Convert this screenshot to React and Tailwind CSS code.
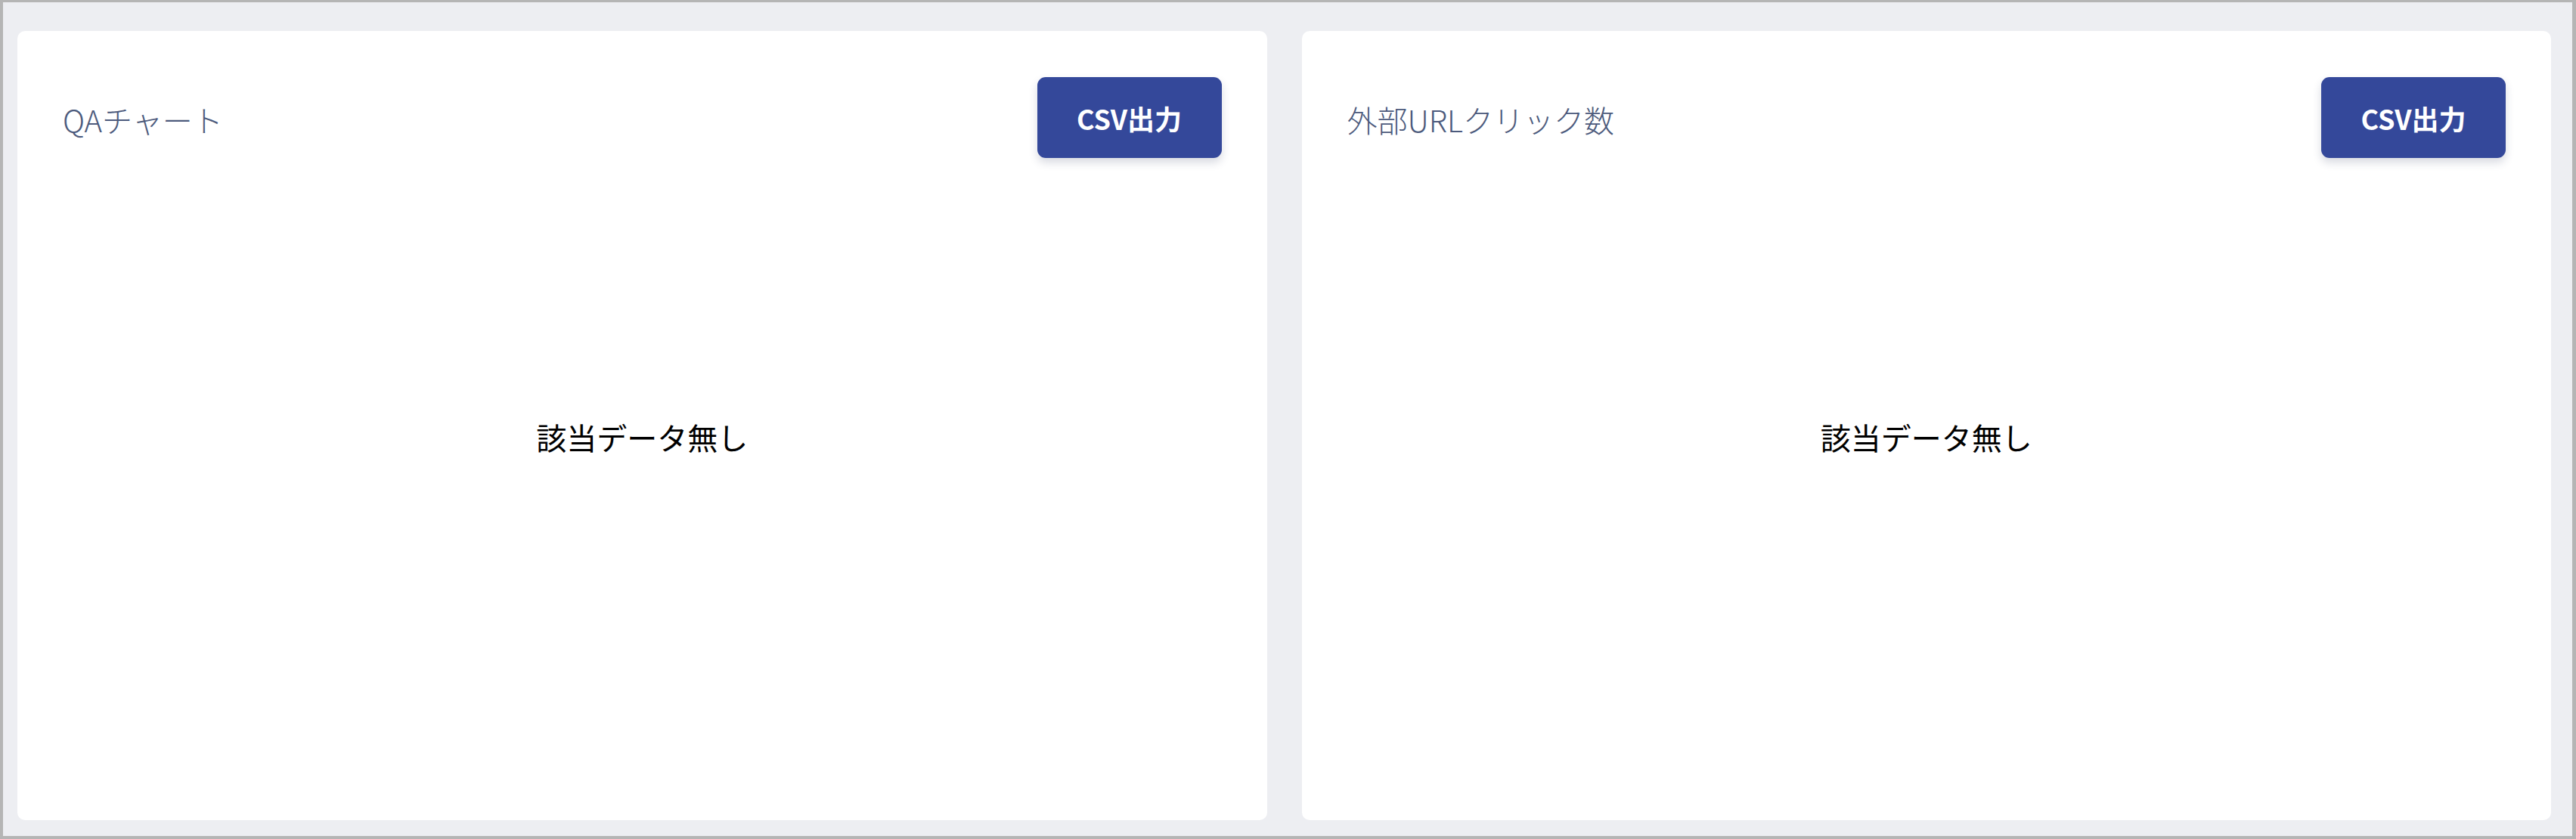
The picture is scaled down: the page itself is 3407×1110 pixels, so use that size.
// App.jsx
const jp = "font-['Noto_Sans_CJK_JP','Noto_Sans',sans-serif]";

function ChartCard({ title }) {
  return (
    <div className="flex-1 bg-white rounded-[10px] flex flex-col px-[60px] pt-[61px]">
      {/* Header */}
      <div className="flex items-center justify-between h-[107px]">
        <h2 className={`${jp} text-[40px] font-light text-[#4c5a7c] leading-none mt-[4px]`}>
          {title}
        </h2>
        <button
          type="button"
          className={`${jp} w-[244px] h-[107px] rounded-[11px] bg-[#34489a] text-white text-[36px] font-bold shadow-[0_6px_12px_rgba(40,50,90,0.18)]`}
        >
          CSV出力
        </button>
      </div>

      {/* Chart area */}
      <div className="h-[738px] flex items-center justify-center">
        <p className={`${jp} text-[40px] text-black leading-none`}>該当データ無し</p>
      </div>
    </div>
  );
}

export default function App() {
  return (
    <div className="w-[3407px] h-[1110px] bg-[#edeef2] border-l-4 border-t-[3px] border-r-[5px] border-b-4 border-[#b5b5b5] pl-[19px] pr-[28px] pt-[38px] pb-[21px] flex gap-[46px]">
      <ChartCard title="QAチャート" />
      <ChartCard title="外部URLクリック数" />
    </div>
  );
}
